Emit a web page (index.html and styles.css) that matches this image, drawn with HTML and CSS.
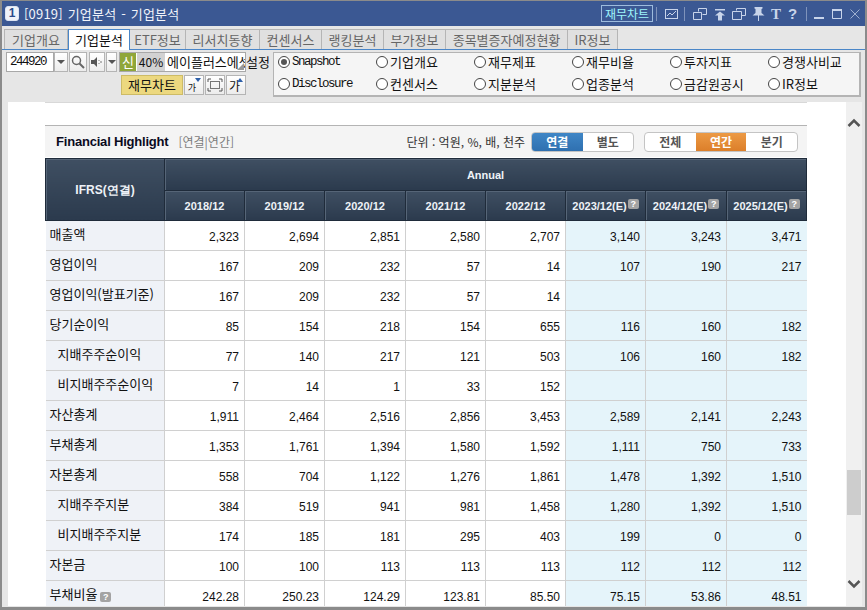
FILE: index.html
```html
<!DOCTYPE html>
<html lang="ko">
<head>
<meta charset="utf-8">
<title>기업분석</title>
<link rel="stylesheet" href="styles.css">
</head>
<body>
<div class="window">
  <header class="titlebar">
    <span class="winnum">1</span>
    <span class="wintitle">[0919] 기업분석 - 기업분석</span>
    <span class="spacer"></span>
    <span class="chartlink">재무차트</span>
    <i class="tsep s1"></i>
    <svg class="ticon" width="13" height="14" viewBox="0 0 13 14"><rect x=".5" y="2.500" width="12" height="9" fill="none" stroke="#c8d4ea"/><path d="M2 9l3-3 2 2 4-4" fill="none" stroke="#c8d4ea"/></svg>
    <i class="tsep s2"></i>
    <svg class="ticon g7" width="14" height="14" viewBox="0 0 14 14"><path d="M5.500 4.500V1.500h8v6h-4M.5 5.500h8v7h-8z" fill="none" stroke="#c8d4ea"/></svg>
    <svg class="ticon" width="12" height="14" viewBox="0 0 12 14"><path d="M1 2h10v1.500H1zM6 4.500l5 4H8v5H4v-5H1z" fill="#c8d4ea"/></svg>
    <svg class="ticon" width="14" height="14" viewBox="0 0 14 14"><path d="M4.500 3.500V1.500h9v7h-4M.5 4.500h9v8h-9z" fill="none" stroke="#c8d4ea"/></svg>
    <svg class="ticon" width="13" height="16" viewBox="0 0 13 16"><path d="M2.500 1h8v1.500l-1 .5v4l3 2.500H.5l3-2.500V3l-1-.5zM6 9.500h1V15H6z" fill="#c8d4ea"/></svg>
    <span class="tchar serif">T</span>
    <span class="tchar q2">?</span>
    <i class="tsep s3"></i>
    <svg class="ticon g8" width="10" height="12" viewBox="0 0 10 12"><path d="M0 9h10v2H0z" fill="#c8d4ea"/></svg>
    <svg class="ticon g8" width="10" height="12" viewBox="0 0 10 12"><path d="M.5 1.500h9v9h-9z" fill="none" stroke="#c8d4ea"/><path d="M0 1h10v2H0z" fill="#c8d4ea"/></svg>
    <svg class="ticon last" width="10" height="12" viewBox="0 0 10 12"><path d="M.5 1.500l9 9M9.500 1.500l-9 9" stroke="#9fb0d0"/></svg>
  </header>

  <nav class="tabs">
    <span class="tab w64">기업개요</span>
    <span class="tab active w62">기업분석</span>
    <span class="tab w56">ETF정보</span>
    <span class="tab w74">리서치동향</span>
    <span class="tab w62">컨센서스</span>
    <span class="tab w62">랭킹분석</span>
    <span class="tab w62">부가정보</span>
    <span class="tab w122">종목별증자예정현황</span>
    <span class="tab w50">IR정보</span>
  </nav>

  <section class="toolbar">
    <div class="tool-left">
      <div class="tool-row">
        <span class="codeinput">244920</span>
        <span class="btn drop"><i class="caret"></i></span>
        <span class="btn search"><svg width="14" height="14" viewBox="0 0 14 14"><circle cx="5.500" cy="5.500" r="4" fill="none" stroke="#666" stroke-width="1.500"/><path d="M8.500 8.500l4.500 4.500" stroke="#666" stroke-width="2"/></svg></span>
        <span class="btn speaker"><svg width="14" height="14" viewBox="0 0 14 14"><path d="M1 5h3l3-3v10l-3-3H1z" fill="#555"/><path d="M9 5v1M9 8v1M11 6v2" stroke="#777"/></svg></span>
        <span class="btn drop2"><i class="caret"></i></span>
        <div class="namebox">
          <span class="shin">신</span>
          <span class="pct">40%</span>
          <span class="cname">에이플러스에셋</span>
          <i class="corner"></i>
        </div>
        <span class="setting">설정</span>
      </div>
      <div class="tool-row second">
        <span class="yellowbtn">재무차트</span>
        <span class="btn mini"><span class="gas">가</span><i class="tri down"></i></span>
        <span class="btn mini"><svg width="16" height="14" viewBox="0 0 16 14"><path d="M1 4V1h3M12 1h3v3M15 10v3h-3M4 13H1v-3" fill="none" stroke="#555"/><rect x="3.500" y="3.500" width="9" height="7" fill="none" stroke="#777"/></svg></span>
        <span class="btn mini"><span class="gal">가</span><i class="tri up"></i></span>
      </div>
    </div>
    <div class="radios">
      <label class="radio mono"><i class="dot on"></i>Snapshot</label>
      <label class="radio"><i class="dot"></i>기업개요</label>
      <label class="radio"><i class="dot"></i>재무제표</label>
      <label class="radio"><i class="dot"></i>재무비율</label>
      <label class="radio"><i class="dot"></i>투자지표</label>
      <label class="radio"><i class="dot"></i>경쟁사비교</label>
      <label class="radio mono"><i class="dot"></i>Disclosure</label>
      <label class="radio"><i class="dot"></i>컨센서스</label>
      <label class="radio"><i class="dot"></i>지분분석</label>
      <label class="radio"><i class="dot"></i>업종분석</label>
      <label class="radio"><i class="dot"></i>금감원공시</label>
      <label class="radio"><i class="dot"></i>IR정보</label>
    </div>
  </section>

  <main class="viewport">
    <div class="content">
      <div class="topline"></div>
      <div class="fh-head">
        <strong class="fh-title">Financial Highlight</strong>
        <span class="fh-sub">[연결|연간]</span>
        <span class="spacer"></span>
        <span class="fh-unit">단위 : 억원, %, 배, 천주</span>
        <div class="seg first">
          <span class="seg-btn blue">연결</span><span class="seg-btn">별도</span>
        </div>
        <div class="seg">
          <span class="seg-btn">전체</span><span class="seg-btn orange">연간</span><span class="seg-btn">분기</span>
        </div>
      </div>
      <table class="fin">
        <colgroup>
          <col class="c0"><col class="c1"><col class="c2"><col class="c3"><col class="c4"><col class="c5"><col class="c6"><col class="c7"><col class="c8">
        </colgroup>
        <thead>
          <tr class="h1"><th rowspan="2" class="ifrs">IFRS(연결)</th><th colspan="8" class="annual">Annual</th></tr>
          <tr class="h2">
            <th>2018/12</th><th>2019/12</th><th>2020/12</th><th>2021/12</th><th>2022/12</th>
            <th>2023/12(E)<i class="q">?</i></th><th>2024/12(E)<i class="q">?</i></th><th>2025/12(E)<i class="q">?</i></th>
          </tr>
        </thead>
        <tbody>
          <tr><th>매출액</th><td>2,323</td><td>2,694</td><td>2,851</td><td>2,580</td><td>2,707</td><td class="e">3,140</td><td class="e">3,243</td><td class="e">3,471</td></tr>
          <tr><th>영업이익</th><td>167</td><td>209</td><td>232</td><td>57</td><td>14</td><td class="e">107</td><td class="e">190</td><td class="e">217</td></tr>
          <tr><th>영업이익(발표기준)</th><td>167</td><td>209</td><td>232</td><td>57</td><td>14</td><td class="e"></td><td class="e"></td><td class="e"></td></tr>
          <tr><th>당기순이익</th><td>85</td><td>154</td><td>218</td><td>154</td><td>655</td><td class="e">116</td><td class="e">160</td><td class="e">182</td></tr>
          <tr><th class="sub">지배주주순이익</th><td>77</td><td>140</td><td>217</td><td>121</td><td>503</td><td class="e">106</td><td class="e">160</td><td class="e">182</td></tr>
          <tr><th class="sub">비지배주주순이익</th><td>7</td><td>14</td><td>1</td><td>33</td><td>152</td><td class="e"></td><td class="e"></td><td class="e"></td></tr>
          <tr><th>자산총계</th><td>1,911</td><td>2,464</td><td>2,516</td><td>2,856</td><td>3,453</td><td class="e">2,589</td><td class="e">2,141</td><td class="e">2,243</td></tr>
          <tr><th>부채총계</th><td>1,353</td><td>1,761</td><td>1,394</td><td>1,580</td><td>1,592</td><td class="e">1,111</td><td class="e">750</td><td class="e">733</td></tr>
          <tr><th>자본총계</th><td>558</td><td>704</td><td>1,122</td><td>1,276</td><td>1,861</td><td class="e">1,478</td><td class="e">1,392</td><td class="e">1,510</td></tr>
          <tr><th class="sub">지배주주지분</th><td>384</td><td>519</td><td>941</td><td>981</td><td>1,458</td><td class="e">1,280</td><td class="e">1,392</td><td class="e">1,510</td></tr>
          <tr><th class="sub">비지배주주지분</th><td>174</td><td>185</td><td>181</td><td>295</td><td>403</td><td class="e">199</td><td class="e">0</td><td class="e">0</td></tr>
          <tr><th>자본금</th><td>100</td><td>100</td><td>113</td><td>113</td><td>113</td><td class="e">112</td><td class="e">112</td><td class="e">112</td></tr>
          <tr><th>부채비율<i class="q big">?</i></th><td>242.28</td><td>250.23</td><td>124.29</td><td>123.81</td><td>85.50</td><td class="e">75.15</td><td class="e">53.86</td><td class="e">48.51</td></tr>
        </tbody>
      </table>
    </div>
    <aside class="scrollbar">
      <svg width="14" height="10" viewBox="0 0 14 10"><path d="M1.500 8L7 2.500 12.500 8" fill="none" stroke="#555" stroke-width="2.500"/></svg>
      <span class="thumb"></span>
      <svg width="14" height="10" viewBox="0 0 14 10"><path d="M1.500 2L7 7.500 12.500 2" fill="none" stroke="#555" stroke-width="2.500"/></svg>
    </aside>
  </main>
</div>
</body>
</html>
```
FILE: styles.css
```css
* { box-sizing: border-box; }
html, body { margin: 0; padding: 0; overflow: hidden; }
body { width: 867px; height: 610px; font-family: "Noto Sans CJK KR", "Liberation Sans", sans-serif; font-size: 12px; color: #111; }
i { font-style: normal; display: block; }
.spacer { flex: 1; }

.window { width: 867px; height: 610px; display: flex; flex-direction: column; background: #e6e6e6; border: solid #8b8b8b; border-width: 1px 2px 3px 2px; overflow: hidden; }

.titlebar { height: 25px; flex: none; display: flex; align-items: center; background: #3b5893; color: #f2f4fa; margin: 0 -2px; padding: 0 7px 0 5px; }
.winnum { width: 14px; height: 15px; border: 1px solid #dbe3f2; border-radius: 3px; background: #f0f3f9; color: #2b4a8a; font: bold 12px/13px "Liberation Sans", sans-serif; text-align: center; }
.wintitle { margin-left: 5px; font-size: 13px; white-space: pre; letter-spacing: .2px; word-spacing: 1px; }
.chartlink { width: 52px; height: 17px; border: 1px solid #9dbbdd; color: #9df5fb; font-size: 12px; line-height: 15px; text-align: center; }
.tsep { width: 1px; height: 14px; background: #7f93bb; flex: none; }
.tsep.s1 { margin: 0 8px 0 3px; }
.tsep.s2 { margin: 0 8px 0 0; }
.tsep.s3 { margin: 0 7px 0 9px; }
.ticon { flex: none; margin-right: 6px; }
.ticon.g7 { margin-right: 7px; }
.ticon.g8 { margin-right: 8px; }
.ticon.last { margin-right: 0; }
.tchar { color: #c8d4ea; font: bold 15px/16px "Liberation Sans", sans-serif; width: 10px; text-align: center; margin-right: 7px; flex: none; }
.tchar.serif { font-family: "Liberation Serif", serif; }
.tchar.q2 { width: 9px; margin-right: 0; }

.tabs { height: 24px; flex: none; display: flex; align-items: flex-end; padding-left: 2px; border-bottom: 1px solid #4a86c8; }
.tab { height: 20px; background: #e0e0e0; border: 1px solid #b5b5b5; border-left-width: 0; border-bottom: 0; color: #666; font-size: 13px; line-height: 19px; text-align: center; flex: none; }
.tab:first-child { border-left-width: 1px; }
.tab.active { background: #fff; color: #111; border: 1px solid #4a86c8; border-bottom: 0; height: 21px; margin-bottom: -1px; position: relative; }
.w50 { width: 50px; } .w56 { width: 56px; } .w62 { width: 62px; } .w64 { width: 64px; } .w74 { width: 74px; } .w122 { width: 122px; }

.toolbar { height: 50px; flex: none; display: flex; padding: 2px 4px 1px 4px; }
.tool-left { width: 267px; flex: none; display: flex; flex-direction: column; }
.tool-row { display: flex; height: 20px; align-items: stretch; }
.tool-row.second { justify-content: flex-end; margin-top: 3px; padding-right: 27px; gap: 1px; }
.codeinput { width: 48px; background: #fff; border: 1px solid #a8a8a8; font: 12.500px/18px "Liberation Mono", monospace; letter-spacing: -1.500px; padding-left: 3px; color: #111; }
.btn { background: linear-gradient(#fff, #ececec); border: 1px solid #b4b4b4; display: flex; align-items: center; justify-content: center; position: relative; flex: none; }
.drop { width: 14px; }
.search { width: 18px; margin-left: 1px; }
.speaker { width: 16px; margin-left: 2px; }
.drop2 { width: 11px; margin-left: 1px; }
.caret { width: 0; height: 0; border: 4px solid transparent; border-top: 4px solid #555; border-bottom: 0; }
.namebox { width: 127px; margin-left: 2px; background: #fff; border: 1px solid #a8a8a8; display: flex; overflow: hidden; position: relative; flex: none; }
.shin { width: 16px; background: #8fa63a; color: #fff; text-align: center; line-height: 17px; font-size: 13px; flex: none; }
.pct { width: 28px; background: #d2d2d2; margin-left: 1px; text-align: center; line-height: 17px; flex: none; font-size: 12px; }
.cname { margin-left: 2px; font-size: 13px; line-height: 17px; white-space: nowrap; flex: 1; min-width: 0; overflow: hidden; }
.corner { position: absolute; right: 1px; bottom: 1px; width: 0; height: 0; border-left: 7px solid transparent; border-bottom: 7px solid #999; }
.setting { font-size: 13px; line-height: 19px; width: 26px; flex: none; white-space: nowrap; }
.yellowbtn { width: 62px; background: #ecd87f; border: 1px solid #cdbb66; text-align: center; font-size: 13px; line-height: 18px; color: #111; }
.mini { width: 20px; }
.gas { font-size: 9px; line-height: 1; margin-top: 4px; margin-left: -4px; }
.gal { font-size: 12px; line-height: 1; margin-top: 1px; margin-left: -3px; }
.tri { position: absolute; right: 2px; top: 2px; width: 0; height: 0; border: 3px solid transparent; }
.tri.down { border-top: 4px solid #2d5fa8; border-bottom: 0; }
.tri.up { border-bottom: 4px solid #2d5fa8; border-top: 0; }

.radios { width: 588px; height: 45px; flex: none; background: #f5f5f5; border: 2px solid #b4b4b4; border-width: 1px 2px 2px 1px; display: grid; grid-template-columns: repeat(6, 98px); grid-auto-rows: 18px; row-gap: 4px; align-content: start; padding-left: 4px; }
.radio { display: flex; align-items: center; font-size: 13px; line-height: 18px; white-space: nowrap; }
.radio.mono { font: 12.500px/18px "Liberation Mono", monospace; letter-spacing: -1.500px; }
.dot { width: 12px; height: 12px; border: 1px solid #444; border-radius: 50%; background: #fff; margin-right: 2px; flex: none; position: relative; }
.dot.on::after { content: ""; position: absolute; left: 2px; top: 2px; width: 6px; height: 6px; background: #555; border-radius: 50%; }

.viewport { flex: 1; min-height: 0; margin: 2px 3px 1px 6px; display: flex; background: #fff; overflow: hidden; }
.content { width: 838px; flex: none; overflow: hidden; padding-left: 37px; }
.topline { width: 762px; height: 1px; background: #d8d8d8; margin-bottom: 22px; }
.fh-head { width: 762px; height: 32px; background: #f4f4f4; border-top: 1px solid #b4b4b4; display: flex; align-items: center; padding: 0 9px 0 11px; }
.fh-title { font: bold 13px "Liberation Sans", sans-serif; letter-spacing: -.200px; color: #0a0a1e; }
.fh-sub { margin-left: 10px; color: #7d7d7d; font-size: 12px; }
.fh-unit { color: #333; font-size: 12px; margin-right: 6px; }
.seg { display: flex; width: 154px; height: 20px; border: 1px solid #c4c4c4; border-radius: 4px; background: #fff; overflow: hidden; margin-left: 10px; }
.seg.first { width: 103px; margin-left: 0; }
.seg-btn { flex: 1; text-align: center; font-size: 12px; font-weight: 700; line-height: 17px; color: #555; }
.seg-btn.blue { background: linear-gradient(#3f86c6, #2f70b0); color: #fff; }
.seg-btn.orange { background: linear-gradient(#ec9a45, #dc7f2a); color: #fff; }

.fin { width: 761px; border-collapse: collapse; table-layout: fixed; font: 12px/14px "Liberation Sans", sans-serif; margin-top: 1px; }
.c0 { width: 119px; } .c1 { width: 80px; } .c2 { width: 80px; } .c3 { width: 81px; } .c4 { width: 80px; } .c5 { width: 80px; } .c6 { width: 80px; } .c7 { width: 81px; } .c8 { width: 80px; }
.fin thead th { background: linear-gradient(#3f4f62, #2b3a4d); color: #eef2f7; font-weight: 700; border: 1px solid #1f2b3a; box-shadow: inset 1px 1px 0 #566577; padding: 0; text-align: center; white-space: nowrap; }
.h1 { height: 32px; }
.h2 { height: 30px; }
.h2 th { font-size: 11px; }
.fin thead th.annual { font-size: 11px; }
.ifrs { font-size: 12px; }
.fin tbody tr { height: 30px; }
.fin tbody th { background: #eff2f7; font-weight: 400; font: 13px/15px "Noto Sans CJK KR", sans-serif; text-align: left; padding: 0 0 4px 4px; border: 1px solid #d0d0d0; border-left: 0; white-space: nowrap; color: #111; }
.fin tbody th.sub { padding-left: 12px; }
.fin td { text-align: right; padding: 2px 5px 0 0; border: 1px solid #d0d0d0; color: #111; }
.fin td:last-child { border-right: 0; }
.fin td.e { background: #e5f4fa; }
.q { display: inline-block; width: 11px; height: 10px; background: #a3a3a3; border-radius: 2px; color: #fff; font: bold 9px/10px "Liberation Sans", sans-serif; text-align: center; vertical-align: 3px; margin-left: 1px; }
.q.big { vertical-align: -1px; margin-left: 3px; }

.scrollbar { width: 16px; flex: none; background: #f0f0f0; position: relative; display: flex; flex-direction: column; align-items: center; justify-content: space-between; padding: 16px 0 17px; }
.thumb { position: absolute; left: 1px; top: 368px; width: 14px; height: 45px; background: #cdcdcd; }
```
